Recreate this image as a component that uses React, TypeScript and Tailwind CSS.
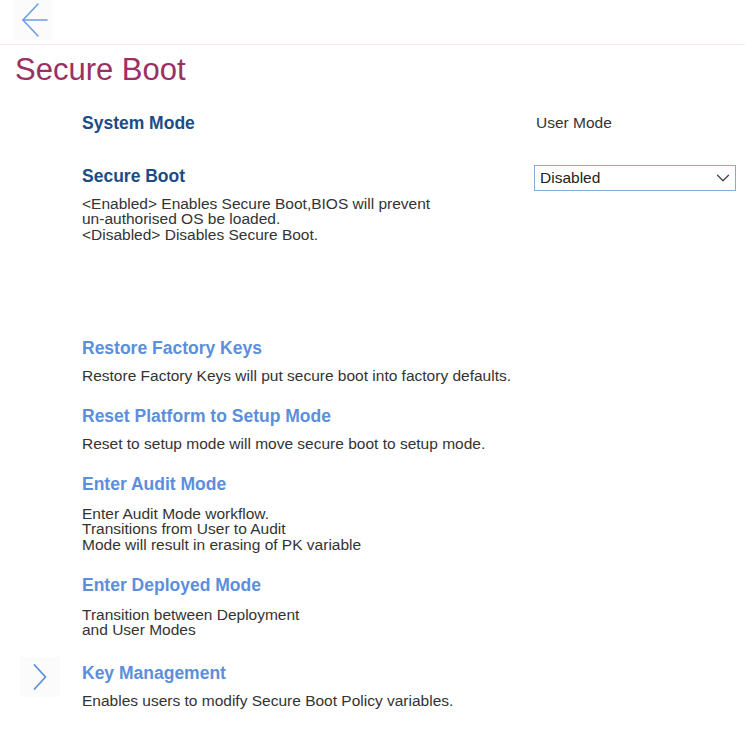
import { ChevronDown } from 'lucide-react';

const actions = [
  {
    title: 'Restore Factory Keys',
    lines: ['Restore Factory Keys will put secure boot into factory defaults.'],
  },
  {
    title: 'Reset Platform to Setup Mode',
    lines: ['Reset to setup mode will move secure boot to setup mode.'],
  },
  {
    title: 'Enter Audit Mode',
    lines: [
      'Enter Audit Mode workflow.',
      'Transitions from User to Audit',
      'Mode will result in erasing of PK variable',
    ],
  },
  {
    title: 'Enter Deployed Mode',
    lines: ['Transition between Deployment', 'and User Modes'],
  },
];

function BackArrow() {
  return (
    <svg width="26" height="34" viewBox="0 0 26 34" fill="none" stroke="#6b9de6" strokeWidth="1.6" strokeLinecap="round" strokeLinejoin="round">
      <path d="M16 1 L1 17 L16 33" />
      <path d="M1 17 H25" />
    </svg>
  );
}

function ChevronRight() {
  return (
    <svg width="14" height="26" viewBox="0 0 14 26" fill="none" stroke="#5b8fe0" strokeWidth="1.8" strokeLinecap="round" strokeLinejoin="round">
      <path d="M1.5 1 L12.5 13 L1.5 25" />
    </svg>
  );
}

function Desc({ lines }: { lines: string[] }) {
  return (
    <div className="text-[15.5px] leading-[15.5px] text-[#333333]">
      {lines.map((l) => (
        <div key={l}>{l}</div>
      ))}
    </div>
  );
}

export default function App() {
  return (
    <div className="min-h-screen bg-white font-['Liberation_Sans',Arial,sans-serif]">
      {/* Top bar */}
      <header className="h-[45px] w-[745px] border-b border-[#f6ecef]">
        <button className="ml-[13px] flex h-[40px] w-[40px] items-center justify-start bg-[#fbfbfb] pl-[9px]">
          <BackArrow />
        </button>
      </header>

      <h1 className="ml-[15px] mt-[7px] text-[31px] leading-[36px] text-[#9b3162]">Secure Boot</h1>

      <div className="mt-[25px] pl-[82px] pr-[16px]">
        {/* System Mode */}
        <div className="flex items-center justify-between">
          <div className="text-[17.5px] font-bold leading-[20px] text-[#1b4c86]">System Mode</div>
          <div className="w-[202px] pl-[2px] text-[15.5px] leading-[18px] text-[#333333]">User Mode</div>
        </div>

        {/* Secure Boot */}
        <div className="mt-[33px] flex items-start justify-between">
          <div>
            <div className="text-[17.5px] font-bold leading-[20px] text-[#1b4c86]">Secure Boot</div>
            <div className="mt-[9.5px]">
              <Desc
                lines={[
                  '<Enabled> Enables Secure Boot,BIOS will prevent',
                  'un-authorised OS be loaded.',
                  '<Disabled> Disables Secure Boot.',
                ]}
              />
            </div>
          </div>
          <div className="-mt-[1.5px] flex h-[26px] w-[202px] items-center justify-between border-[1.5px] border-[#86acd8] pl-[5px] pr-[1px]">
            <span className="text-[15.5px] text-[#222222]">Disabled</span>
            <ChevronDown size={22} strokeWidth={1.4} color="#444444" />
          </div>
        </div>
      </div>

      {/* Actions */}
      <div className="mt-[96px] pl-[82px]">
        {actions.map((a, i) => (
          <div key={a.title} className={i === 0 ? '' : 'mt-[23px]'}>
            <div className="text-[17.5px] font-bold leading-[20px] text-[#5b8fdc]">{a.title}</div>
            <div className={a.lines.length > 1 ? 'mt-[11.5px]' : 'mt-[9.5px]'}>
              <Desc lines={a.lines} />
            </div>
          </div>
        ))}
      </div>

      {/* Key Management */}
      <div className="mt-[25px] flex pl-[20px]">
        <div className="w-[62px]">
          <div className="-mt-[6px] flex h-[40px] w-[40px] items-center justify-center bg-[#fbfbfb]">
            <ChevronRight />
          </div>
        </div>
        <div>
          <div className="text-[17.5px] font-bold leading-[20px] text-[#5b8fdc]">Key Management</div>
          <div className="mt-[10.5px]">
            <Desc lines={['Enables users to modify Secure Boot Policy variables.']} />
          </div>
        </div>
      </div>
    </div>
  );
}
